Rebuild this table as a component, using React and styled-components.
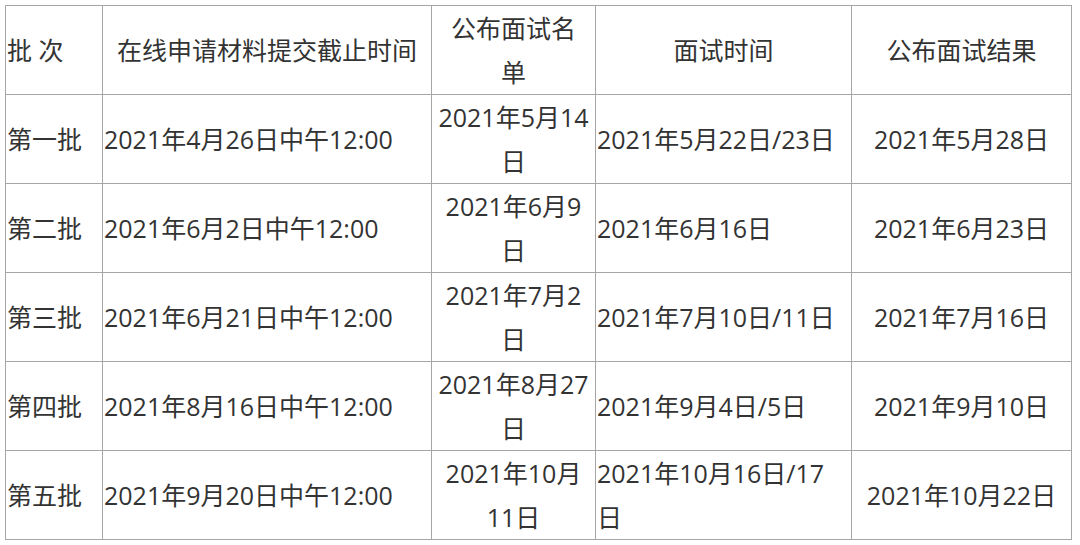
import React from 'react'
import styled, { createGlobalStyle } from 'styled-components'

const GlobalStyle = createGlobalStyle`
  html, body {
    margin: 0;
    padding: 0;
    background: #fff;
  }
`

const Page = styled.div`
  padding: 5px;
  font-family: "Open Sans", "Noto Sans CJK SC", sans-serif;
  font-size: 25px;
  color: #333;
`

const Table = styled.table`
  width: 1066px;
  border-collapse: collapse;
  table-layout: fixed;
`

const Row = styled.tr`
  height: ${props => props.h || 89}px;
`

const Cell = styled.td`
  border: 1px solid #a6a6a6;
  padding: 0 ${props => props.pr ?? 4}px 0 ${props => props.pl ?? 4}px;
  text-align: ${props => props.align || 'center'};
  vertical-align: middle;
  line-height: 44px;
  word-break: normal;
`

const columns = [97, 329, 164, 256, 220]

const rows = [
  ['第一批', '2021年4月26日中午12:00', '2021年5月14日', '2021年5月22日/23日', '2021年5月28日'],
  ['第二批', '2021年6月2日中午12:00', '2021年6月9日', '2021年6月16日', '2021年6月23日'],
  ['第三批', '2021年6月21日中午12:00', '2021年7月2日', '2021年7月10日/11日', '2021年7月16日'],
  ['第四批', '2021年8月16日中午12:00', '2021年8月27日', '2021年9月4日/5日', '2021年9月10日'],
  ['第五批', '2021年9月20日中午12:00', '2021年10月11日', '2021年10月16日/17日', '2021年10月22日'],
]

export default function App() {
  return (
    <>
      <GlobalStyle />
      <Page>
        <Table>
          <colgroup>
            {columns.map((w, i) => <col key={i} style={{ width: w }} />)}
          </colgroup>
          <tbody>
            <Row>
              <Cell align="left" pl={1}>批 次</Cell>
              <Cell>在线申请材料提交截止时间</Cell>
              <Cell>公布面试名<br />单</Cell>
              <Cell>面试时间</Cell>
              <Cell>公布面试结果</Cell>
            </Row>
            {rows.map((r, i) => (
              <Row key={i} h={i === rows.length - 1 ? 88 : 89}>
                <Cell align="left" pl={1}>{r[0]}</Cell>
                <Cell align="left" pl={1}>{r[1]}</Cell>
                <Cell>{r[2]}</Cell>
                <Cell align="left" pl={1} pr={6}>{r[3]}</Cell>
                <Cell>{r[4]}</Cell>
              </Row>
            ))}
          </tbody>
        </Table>
      </Page>
    </>
  )
}
